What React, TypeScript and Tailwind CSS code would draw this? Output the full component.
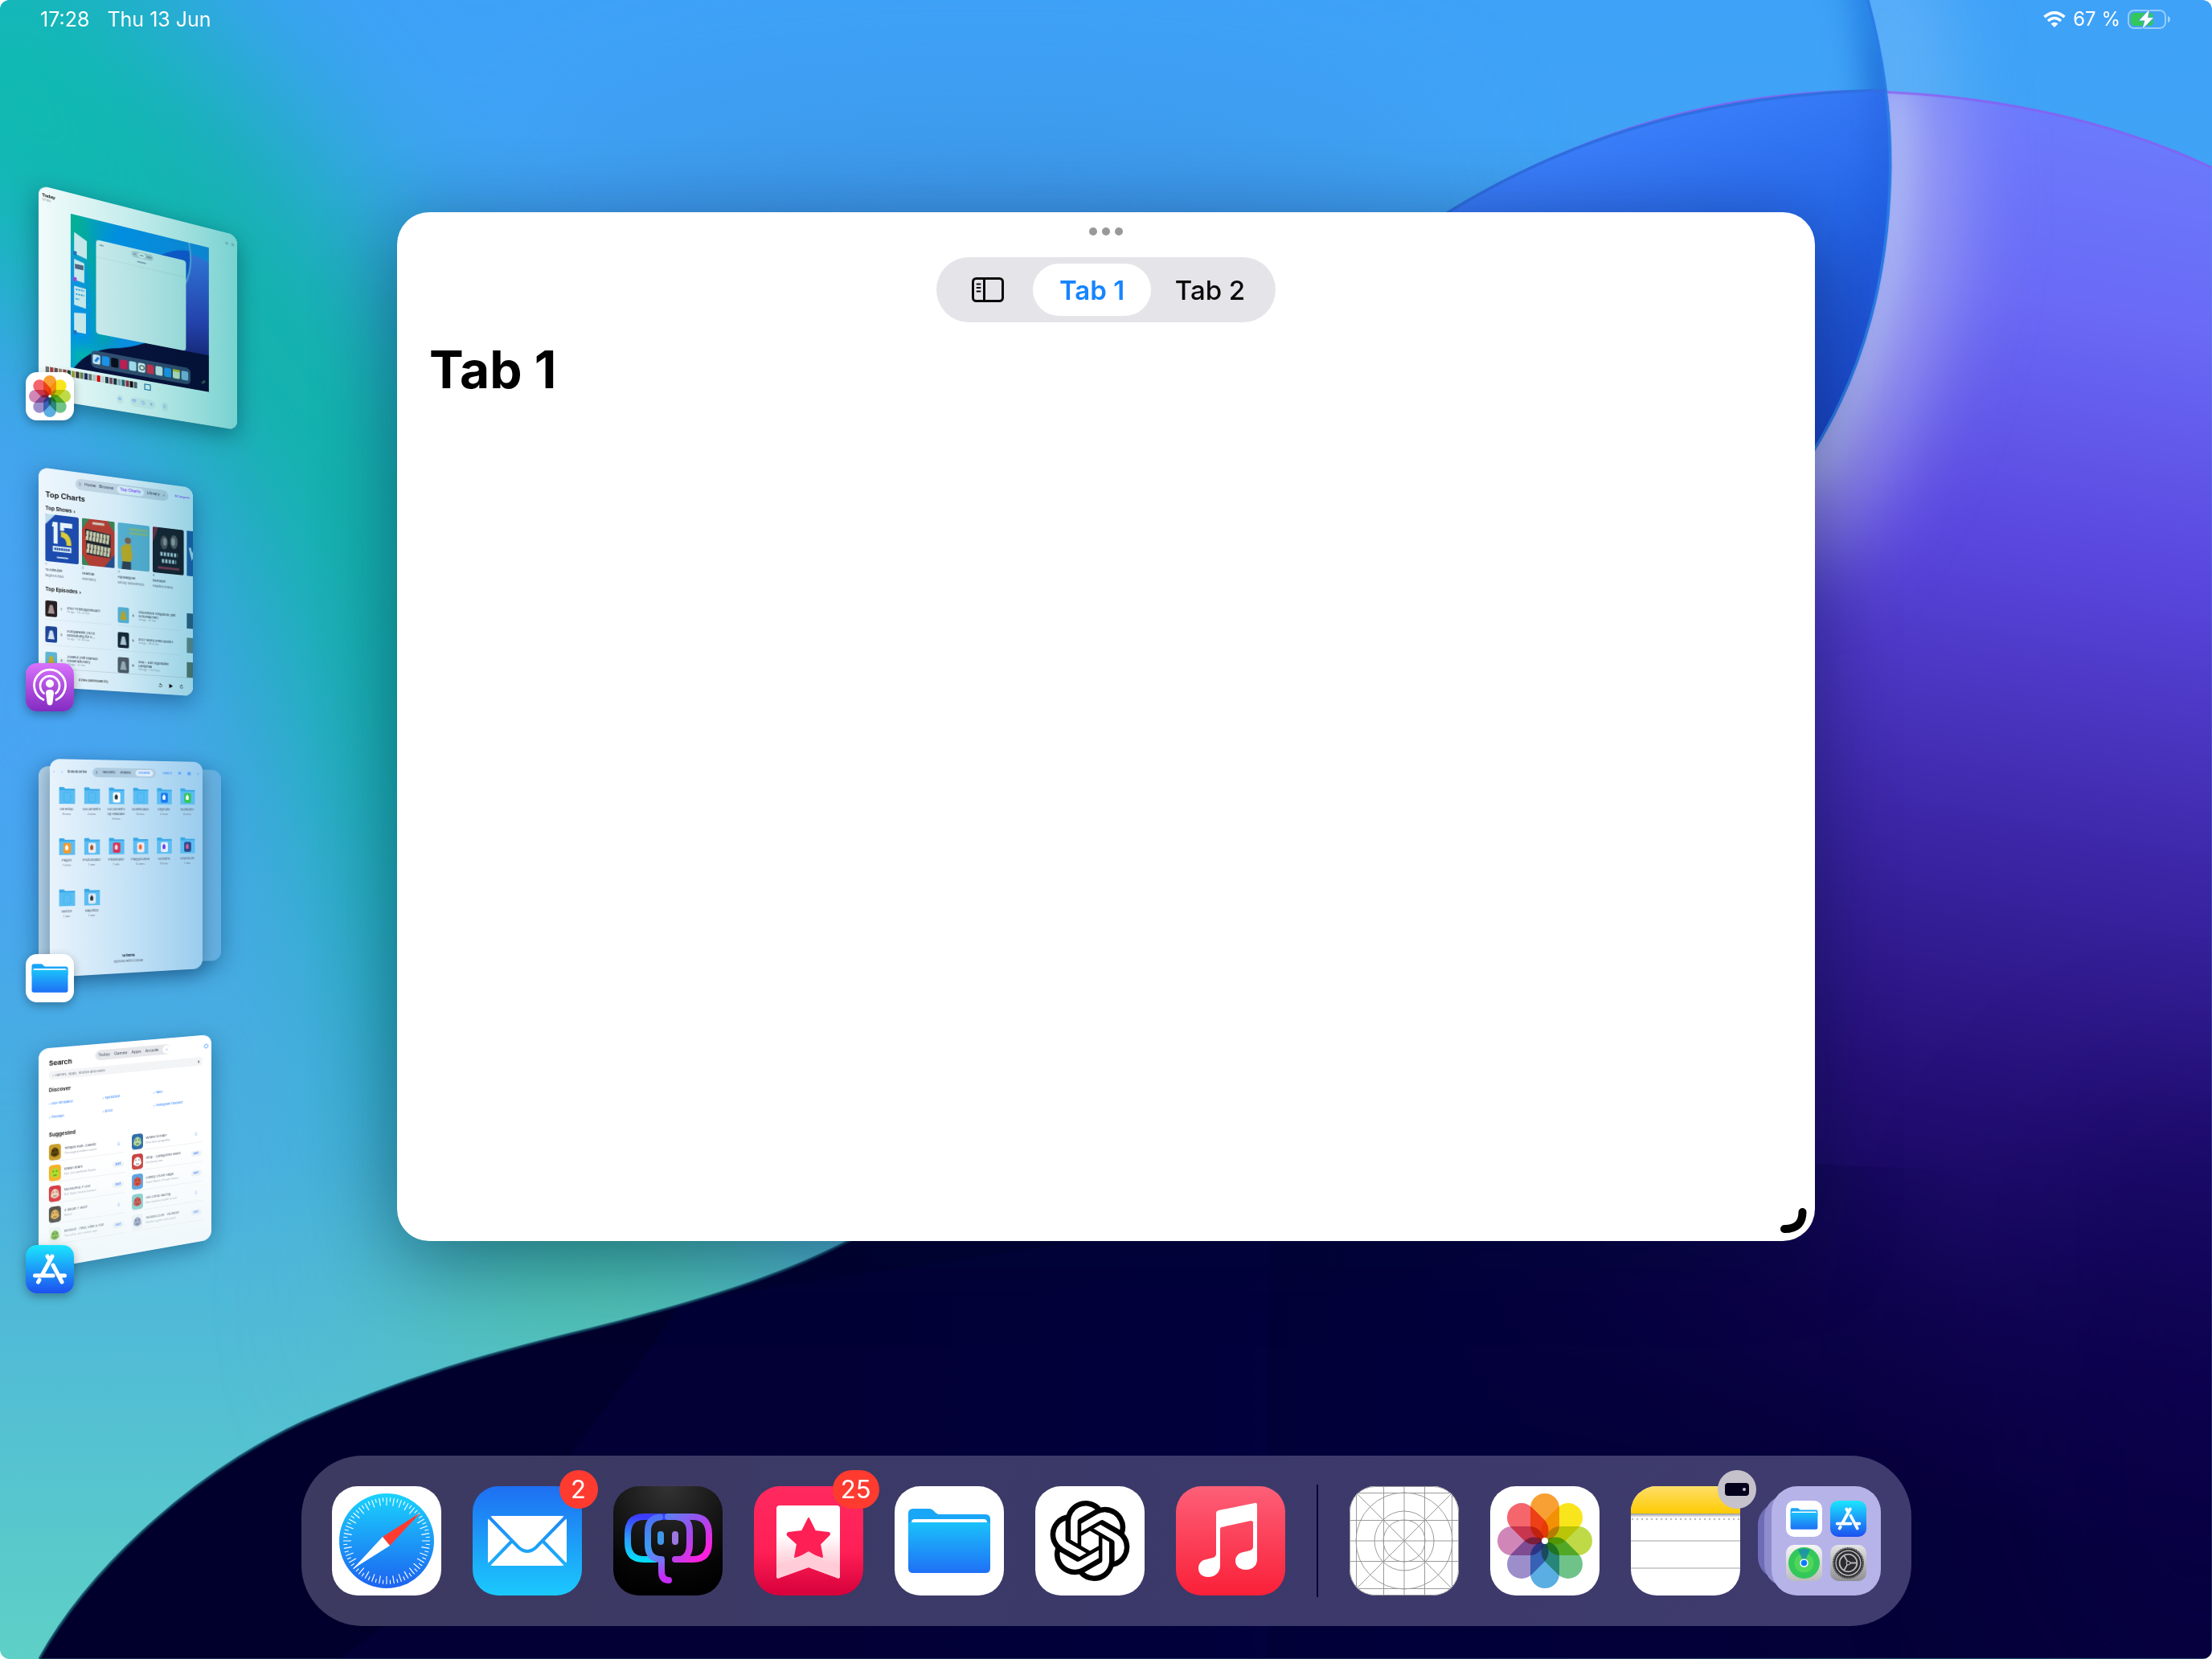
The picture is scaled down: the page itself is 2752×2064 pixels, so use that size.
import React, { useState } from 'react';

/* ---------- Wallpaper ---------- */

const Wallpaper: React.FC = () => (
  <svg className="absolute inset-0 w-full h-full" viewBox="0 0 1568 1176" preserveAspectRatio="xMidYMid slice" aria-hidden="true">
    <defs>
      <linearGradient id="sky" x1="0" y1="0" x2="0" y2="1">
        <stop offset="0" stopColor="#3ea2f8" />
        <stop offset="0.4" stopColor="#45a5ea" />
        <stop offset="0.7" stopColor="#49b0df" />
        <stop offset="1" stopColor="#5ed0c6" />
      </linearGradient>
      <linearGradient id="orb" gradientUnits="userSpaceOnUse" x1="1470" y1="64" x2="1280" y2="1060">
        <stop offset="0" stopColor="#6c7dfe" />
        <stop offset="0.15" stopColor="#6a6af6" />
        <stop offset="0.32" stopColor="#5a47de" />
        <stop offset="0.52" stopColor="#3d27a8" />
        <stop offset="0.7" stopColor="#251078" />
        <stop offset="0.86" stopColor="#100450" />
        <stop offset="1" stopColor="#050038" />
      </linearGradient>
      <linearGradient id="leaf" gradientUnits="userSpaceOnUse" x1="1200" y1="64" x2="1290" y2="320">
        <stop offset="0" stopColor="#3c80fb" />
        <stop offset="0.45" stopColor="#2668ea" />
        <stop offset="1" stopColor="#1c46ca" />
      </linearGradient>
      <linearGradient id="night" gradientUnits="userSpaceOnUse" x1="560" y1="0" x2="1400" y2="0">
        <stop offset="0" stopColor="#01002c" />
        <stop offset="0.5" stopColor="#02003a" />
        <stop offset="1" stopColor="#02003a" stopOpacity="0" />
      </linearGradient>
      <filter id="blur35" filterUnits="userSpaceOnUse" x="-300" y="-300" width="2200" height="1800" colorInterpolationFilters="sRGB"><feGaussianBlur stdDeviation="34" /></filter>
      <filter id="blur60" filterUnits="userSpaceOnUse" x="-300" y="-300" width="2200" height="1800" colorInterpolationFilters="sRGB"><feGaussianBlur stdDeviation="60" /></filter>
      <filter id="blur12" filterUnits="userSpaceOnUse" x="-300" y="-300" width="2200" height="1800" colorInterpolationFilters="sRGB"><feGaussianBlur stdDeviation="12" /></filter>
      <clipPath id="orbClip">
        <path d="M1000 168C1090 105 1200 64 1320 64C1415 66 1500 86 1568 118V1176H28C60 1118 130 1048 215 1008C320 962 400 948 450 934C510 918 560 902 605 878L900 700Z" />
      </clipPath>
      <clipPath id="rightOfArc">
        <path d="M1324 0C1335 40 1340 80 1340 118C1339 195 1322 262 1284 322V1176H1568V0Z" />
      </clipPath>
      <clipPath id="leftOfArc">
        <path d="M1324 0C1335 40 1340 80 1340 118C1339 195 1322 262 1284 322L900 322V0Z" />
      </clipPath>
    </defs>
    <rect width="1568" height="1176" fill="url(#sky)" />
    <g filter="url(#blur60)">
      <path d="M-60 10L90 110L250 320L320 540L400 780L460 960" stroke="#10b3a8" strokeWidth="190" fill="none" />
      <ellipse cx="0" cy="60" rx="120" ry="150" fill="#0fbab0" />
      <ellipse cx="700" cy="150" rx="300" ry="60" fill="#3a8fdf" opacity="0.7" />
      <ellipse cx="10" cy="500" rx="80" ry="200" fill="#48a4f4" />
      <ellipse cx="430" cy="920" rx="150" ry="60" fill="#5bc4ad" />
    </g>
    <g clipPath="url(#leftOfArc)">
      <path d="M1318 -40C1335 40 1340 80 1340 118" stroke="#1f78dd" strokeWidth="22" fill="none" filter="url(#blur12)" />
    </g>
    <g clipPath="url(#rightOfArc)">
      <path d="M1330 -40C1345 40 1352 80 1352 130" stroke="#8cc4fa" strokeWidth="40" fill="none" filter="url(#blur35)" opacity="0.8" />
    </g>
    <g clipPath="url(#orbClip)">
      <rect width="1568" height="1176" fill="url(#orb)" />
      <ellipse cx="1560" cy="1010" rx="150" ry="230" fill="#0a0150" opacity="0.4" filter="url(#blur60)" />
      <g clipPath="url(#rightOfArc)">
        <path d="M1338 40C1356 150 1350 250 1260 380" stroke="#b3b6f0" strokeWidth="58" fill="none" filter="url(#blur35)" />
        <path d="M1342 60C1346 150 1338 230 1280 340" stroke="#b6caf6" strokeWidth="14" fill="none" filter="url(#blur12)" />
      </g>
      <path d="M28 1176C60 1118 130 1048 215 1008C320 962 400 948 450 934C510 918 560 902 605 878L700 800L1400 830V1176Z" fill="url(#night)" />
      <path d="M484 922C440 990 400 1030 370 1080L240 1176H900V860Z" fill="#060050" opacity="0.25" />
      <path d="M1000 168C1090 105 1200 64 1320 64C1415 66 1500 86 1568 118" stroke="#8a5cf0" strokeWidth="3" fill="none" opacity="0.8" />
    </g>
    <path d="M1000 168C1090 105 1200 66 1337 64C1342 90 1340 118 1340 118C1339 195 1322 262 1284 322L1000 322Z" fill="url(#leaf)" />
    <g clipPath="url(#leftOfArc)">
      <path d="M1336 30C1342 100 1339 195 1284 322" stroke="#1a4bc8" strokeWidth="14" fill="none" opacity="0.5" filter="url(#blur12)" />
    </g>
    <path d="M1324 0C1335 40 1340 80 1340 118C1339 195 1322 262 1284 322" stroke="#2b7ce6" strokeWidth="2" fill="none" />
    <path d="M1000 168C1090 105 1200 66 1337 64" stroke="#2f6fe0" strokeWidth="2" fill="none" />
    <path d="M28 1176C60 1118 130 1048 215 1008C320 962 400 948 450 934C510 918 560 902 605 878" stroke="#0d3a58" strokeWidth="2" fill="none" opacity="0.8" />
  </svg>
);

/* ---------- App icons ---------- */

const range = (n: number) => Array.from({ length: n }, (_, i) => i);

const Safari: React.FC = () => (
  <svg className="w-full h-full" viewBox="0 0 136 136">
    <defs>
      <linearGradient id="safari" x1="0" y1="0" x2="0" y2="1">
        <stop offset="0" stopColor="#1ad3fd" />
        <stop offset="1" stopColor="#1d62f0" />
      </linearGradient>
    </defs>
    <rect width="136" height="136" fill="#fff" />
    <circle cx="68" cy="68" r="59" fill="url(#safari)" />
    {range(72).map((i) => (
      <path key={i} d={i % 2 ? 'M68 14V19' : 'M68 14V24'} stroke="#fff" strokeWidth="1.1" transform={`rotate(${i * 5} 68 68)`} />
    ))}
    <path d="M110 33L63 63L72 74Z" fill="#ff3b30" />
    <path d="M26 103L63 63L72 74Z" fill="#fff" />
  </svg>
);

const Mail: React.FC = () => (
  <svg className="w-full h-full" viewBox="0 0 136 136">
    <defs>
      <linearGradient id="mail" gradientUnits="userSpaceOnUse" x1="0" y1="0" x2="0" y2="136">
        <stop offset="0" stopColor="#1e6ff2" />
        <stop offset="1" stopColor="#1bc9fd" />
      </linearGradient>
    </defs>
    <rect width="136" height="136" fill="url(#mail)" />
    <rect x="19" y="37" width="98" height="62" rx="6" fill="#fff" />
    <path d="M20 38L57 76Q68 86 79 76L116 38M20 98L49 68M116 98L87 68" stroke="url(#mail)" strokeWidth="4" fill="none" />
  </svg>
);

const Elephant: React.FC = () => (
  <svg className="w-full h-full" viewBox="0 0 136 136">
    <defs>
      <radialGradient id="elBg" cx="0.5" cy="0" r="1">
        <stop offset="0" stopColor="#333" />
        <stop offset="0.8" stopColor="#050505" />
        <stop offset="1" stopColor="#000" />
      </radialGradient>
      <linearGradient id="elLeft" gradientUnits="userSpaceOnUse" x1="30" y1="38" x2="24" y2="95">
        <stop offset="0" stopColor="#3c3cff" />
        <stop offset="0.5" stopColor="#2d9cff" />
        <stop offset="1" stopColor="#00e5f5" />
      </linearGradient>
      <linearGradient id="elInner" gradientUnits="userSpaceOnUse" x1="43" y1="38" x2="62" y2="112">
        <stop offset="0" stopColor="#4f6ef5" />
        <stop offset="0.5" stopColor="#3c9df5" />
        <stop offset="0.78" stopColor="#7f6cf5" />
        <stop offset="1" stopColor="#c52cf5" />
      </linearGradient>
      <linearGradient id="elRight" gradientUnits="userSpaceOnUse" x1="66" y1="36" x2="116" y2="84">
        <stop offset="0" stopColor="#5a82f0" />
        <stop offset="0.5" stopColor="#a04bf0" />
        <stop offset="1" stopColor="#ff1fdc" />
      </linearGradient>
    </defs>
    <rect width="136" height="136" fill="url(#elBg)" />
    <g fill="none" strokeWidth="8" strokeLinecap="round" strokeLinejoin="round">
      <path d="M68 38H38Q18 38 18 60V70Q18 91 38 91H52" stroke="url(#elLeft)" />
      <path d="M58 38.500Q43 40 43 56V72Q43 90 58 91H60V106Q60 117 69 117" stroke="url(#elInner)" />
      <path d="M68 38H99Q119 38 119 60V70Q119 91 99 91H77" stroke="url(#elRight)" />
      <path d="M80 38.500Q95 40 95 56V72Q95 88 84 91" stroke="url(#elRight)" />
    </g>
    <rect x="55" y="56" width="8" height="17" rx="4" fill="#3f97e8" />
    <rect x="73" y="56" width="8" height="17" rx="4" fill="#9a78e0" />
  </svg>
);

const Bookmark: React.FC = () => (
  <svg className="w-full h-full" viewBox="0 0 136 136">
    <defs>
      <linearGradient id="bmBg" x1="0" y1="0" x2="0" y2="1">
        <stop offset="0" stopColor="#ff2a60" />
        <stop offset="0.6" stopColor="#fe1f55" />
        <stop offset="1" stopColor="#d6003a" />
      </linearGradient>
      <linearGradient id="bmPaper" x1="0" y1="0" x2="0" y2="1">
        <stop offset="0.4" stopColor="#fff" />
        <stop offset="1" stopColor="#ffb3c4" />
      </linearGradient>
    </defs>
    <rect width="136" height="136" fill="url(#bmBg)" />
    <path d="M32 24H103Q107 24 107 28V112Q107 116 103 114L68 101L32 114Q28 116 28 112V28Q28 24 32 24Z" fill="url(#bmPaper)" />
    <path d="M68 40L76 56L93 58Q95 59 93 61L82 72L85 88L68 82L51 88L54 72L42 61Q41 59 43 58L60 56Z" fill="#fe1f55" stroke="#fe1f55" strokeWidth="2" strokeLinejoin="round" />
    <path d="M28 104L68 81L107 104V112Q107 116 103 114L68 101L32 114Q28 116 28 112Z" fill="#ffccd7" />
  </svg>
);

const Files: React.FC = () => (
  <svg className="w-full h-full" viewBox="0 0 136 136">
    <defs>
      <linearGradient id="files" x1="0" y1="0" x2="0" y2="1">
        <stop offset="0" stopColor="#1bc1fb" />
        <stop offset="1" stopColor="#1f70f5" />
      </linearGradient>
    </defs>
    <rect width="136" height="136" fill="#fff" />
    <path d="M17 34Q17 28 23 28H43Q46 28 48 30L51 33Q53 35 56 35H113Q119 35 119 41V60H17Z" fill="#1aa6f7" />
    <path d="M21 48V45Q21 41 25 41H111Q115 41 115 45V48Z" fill="#fff" />
    <path d="M17 48Q17 45 20 45H116Q119 45 119 48V102Q119 108 113 108H23Q17 108 17 102Z" fill="url(#files)" />
  </svg>
);

const Knot: React.FC = () => (
  <svg className="w-full h-full bg-white" viewBox="-4.32 -4.32 32.64 32.64">
    <path d="M22.2819 9.8211a5.9847 5.9847 0 0 0-.5157-4.9108 6.0462 6.0462 0 0 0-6.5098-2.9A6.0651 6.0651 0 0 0 4.9807 4.1818a5.9847 5.9847 0 0 0-3.9977 2.9 6.0462 6.0462 0 0 0 .7427 7.0966 5.98 5.98 0 0 0 .511 4.9107 6.051 6.051 0 0 0 6.5146 2.9001A5.9847 5.9847 0 0 0 13.2599 24a6.0557 6.0557 0 0 0 5.7718-4.2058 5.9894 5.9894 0 0 0 3.9977-2.9001 6.0557 6.0557 0 0 0-.7475-7.0729zm-9.022 12.6081a4.4755 4.4755 0 0 1-2.8764-1.0408l.1419-.0804 4.7783-2.7582a.7948.7948 0 0 0 .3927-.6813v-6.7369l2.02 1.1686a.071.071 0 0 1 .038.052v5.5826a4.504 4.504 0 0 1-4.4945 4.4944zm-9.6607-4.1254a4.4708 4.4708 0 0 1-.5346-3.0137l.142.0852 4.783 2.7582a.7712.7712 0 0 0 .7806 0l5.8428-3.3685v2.3324a.0804.0804 0 0 1-.0332.0615L9.74 19.9502a4.4992 4.4992 0 0 1-6.1408-1.6464zM2.3408 7.8956a4.485 4.485 0 0 1 2.3655-1.9728V11.6a.7664.7664 0 0 0 .3879.6765l5.8144 3.3543-2.0201 1.1685a.0757.0757 0 0 1-.071 0l-4.8303-2.7865A4.504 4.504 0 0 1 2.3408 7.872zm16.5963 3.8558L13.1038 8.364 15.1192 7.2a.0757.0757 0 0 1 .071 0l4.8303 2.7913a4.4944 4.4944 0 0 1-.6765 8.1042v-5.6772a.79.79 0 0 0-.407-.667zm2.0107-3.0231l-.142-.0852-4.7735-2.7818a.7759.7759 0 0 0-.7854 0L9.409 9.2297V6.8974a.0662.0662 0 0 1 .0284-.0615l4.8303-2.7866a4.4992 4.4992 0 0 1 6.6802 4.66zM8.3065 12.863l-2.02-1.1638a.0804.0804 0 0 1-.038-.0567V6.0742a4.4992 4.4992 0 0 1 7.3757-3.4537l-.142.0805L8.704 5.459a.7948.7948 0 0 0-.3927.6813zm1.0976-2.3654l2.602-1.4998 2.6069 1.4998v2.9994l-2.5974 1.4997-2.6067-1.4997Z" />
  </svg>
);

const Music: React.FC = () => (
  <svg className="w-full h-full" viewBox="0 0 136 136">
    <defs>
      <linearGradient id="music" x1="0" y1="0" x2="0" y2="1">
        <stop offset="0" stopColor="#fd5f78" />
        <stop offset="1" stopColor="#fa2038" />
      </linearGradient>
    </defs>
    <rect width="136" height="136" fill="url(#music)" />
    <path d="M98 21Q101 20 101 24V91C101 99 95 104 87 104C80 104 74 100 74 93C74 87 78 83 84 82L92 80Q96 79 96 75V45Q96 43 93 43L57 51Q55 51 55 54V99C55 107 49 113 40 113C33 113 28 109 28 102C28 96 32 92 38 91L46 89Q50 88 50 84V34Q50 31 53 30Z" fill="#fff" />
  </svg>
);

const Template: React.FC = () => (
  <svg className="w-full h-full" viewBox="0 0 136 136">
    <rect width="136" height="136" fill="#fff" />
    <g fill="none" stroke="#9a9a9a" strokeWidth="1">
      <rect x="0.5" y="0.5" width="135" height="135" rx="31" />
      <path d="M8.500 0V136M42.500 0V136M68 0V136M93.500 0V136M127.500 0V136M0 8.500H136M0 42.500H136M0 68H136M0 93.500H136M0 127.500H136M8 8L128 128M128 8L8 128" />
      <circle cx="68" cy="68" r="60" />
      <circle cx="68" cy="68" r="37" />
      <circle cx="68" cy="68" r="26" />
    </g>
  </svg>
);

const petals = ['#f8a033', '#f9e51c', '#bfda46', '#6fc389', '#5aaee2', '#9c8ecb', '#d087b8', '#f4656c'];

const Photos: React.FC = () => (
  <svg className="w-full h-full isolate" viewBox="0 0 136 136">
    <rect width="136" height="136" fill="#fff" />
    {petals.map((color, i) => (
      <rect key={color} x="50" y="9" width="36" height="58" rx="18" fill={color} transform={`rotate(${i * 45} 68 68)`} className="mix-blend-multiply" />
    ))}
    <circle cx="68" cy="68" r="4" fill="#fff" />
  </svg>
);

const Notes: React.FC = () => (
  <svg className="w-full h-full" viewBox="0 0 136 136">
    <defs>
      <linearGradient id="notes" x1="0" y1="0" x2="0" y2="1">
        <stop offset="0" stopColor="#fede68" />
        <stop offset="1" stopColor="#fecb02" />
      </linearGradient>
      <linearGradient id="notesEdge" x1="0" y1="0" x2="0" y2="1">
        <stop offset="0" stopColor="#999" />
        <stop offset="1" stopColor="#fff" />
      </linearGradient>
    </defs>
    <rect width="136" height="136" fill="#fff" />
    <rect y="34" width="136" height="5" fill="url(#notesEdge)" />
    <rect width="136" height="34" fill="url(#notes)" />
    <path d="M2 41H136" stroke="#bdbdbd" strokeWidth="2.500" strokeLinecap="round" strokeDasharray="0.1 5.9" />
    <path d="M0 68H136M0 102H136" stroke="#d0d0d2" strokeWidth="2" />
  </svg>
);

const AppStore: React.FC = () => (
  <svg className="w-full h-full" viewBox="0 0 60 60">
    <defs>
      <linearGradient id="store" x1="0" y1="0" x2="0" y2="1">
        <stop offset="0" stopColor="#1be6fe" />
        <stop offset="0.5" stopColor="#1c9bf8" />
        <stop offset="1" stopColor="#1d50f0" />
      </linearGradient>
    </defs>
    <rect width="60" height="60" fill="url(#store)" />
    <path d="M33 14L21 36M27 14L29.500 18M34 25L45 46M17 43.500L15.500 46M11.500 38H34M43 38H48.500" stroke="#fff" strokeWidth="5" strokeLinecap="round" fill="none" />
  </svg>
);

const Podcasts: React.FC = () => (
  <svg className="w-full h-full" viewBox="0 0 60 60">
    <defs>
      <linearGradient id="pods" x1="0" y1="0" x2="0" y2="1">
        <stop offset="0" stopColor="#d971fc" />
        <stop offset="1" stopColor="#832bc1" />
      </linearGradient>
    </defs>
    <rect width="60" height="60" fill="url(#pods)" />
    <g fill="none" stroke="#fff" strokeWidth="2.800" strokeLinecap="round">
      <path d="M22 45.500A19.500 19.500 0 1 1 38 45.500" />
      <path d="M22.500 37.500A12 12 0 1 1 37.500 37.500" />
    </g>
    <circle cx="30" cy="25.500" r="5" fill="#fff" />
    <path d="M25 37Q25 33 30 33Q35 33 35 37L33.500 49Q33 52.500 30 52.500Q27 52.500 26.500 49Z" fill="#fff" />
  </svg>
);

const FindMy: React.FC = () => (
  <svg className="w-full h-full" viewBox="0 0 60 60">
    <defs>
      <linearGradient id="fmBg" x1="0" y1="0" x2="0" y2="1">
        <stop offset="0" stopColor="#f6f6f6" />
        <stop offset="1" stopColor="#bdbdbd" />
      </linearGradient>
    </defs>
    <rect width="60" height="60" fill="url(#fmBg)" />
    <circle cx="30" cy="30" r="26" fill="#34c85a" />
    <circle cx="30" cy="30" r="16" fill="#4fd65b" />
    <path d="M30 30L20 8Q30 4 40 8Z" fill="#1687b8" opacity="0.75" />
    <circle cx="30" cy="30" r="7" fill="#fff" />
    <circle cx="30" cy="30" r="5" fill="#0a7cff" />
  </svg>
);

const Settings: React.FC = () => (
  <svg className="w-full h-full" viewBox="0 0 60 60">
    <defs>
      <linearGradient id="setBg" x1="0" y1="0" x2="0" y2="1">
        <stop offset="0" stopColor="#e4e4e7" />
        <stop offset="1" stopColor="#8e8e93" />
      </linearGradient>
    </defs>
    <rect width="60" height="60" fill="url(#setBg)" />
    <circle cx="30" cy="30" r="25" fill="none" stroke="#2c2c2e" strokeWidth="2" strokeDasharray="1.500 1" />
    <circle cx="30" cy="30" r="24" fill="#2c2c2e" />
    <g fill="none" stroke="#b5b5b9">
      <circle cx="30" cy="30" r="20.500" strokeWidth="2" />
      <circle cx="30" cy="30" r="14.500" strokeWidth="2.500" />
      <path d="M33 30H45M28.500 32.500L22.500 43M28.500 27.500L22.500 17" strokeWidth="2.500" />
      <circle cx="30" cy="30" r="3" strokeWidth="1.500" />
    </g>
  </svg>
);

/* ---------- Stage strip previews ---------- */

interface TiltProps {
  width: number;
  height: number;
  left: [number, number];
  right: [number, number];
  className?: string;
  children?: React.ReactNode;
}

// Turns a flat panel away from the viewer: left and right give the top and bottom of each edge
const Tilt: React.FC<TiltProps> = ({ width, height, left, right, className = '', children }) => {
  const ratio = (left[1] - left[0]) / (right[1] - right[0]);
  const g = (ratio - 1) / width;
  const b = (right[0] * ratio - left[0]) / width;
  const c = (left[1] - left[0]) / height;
  const transform = `matrix3d(${ratio},${b},0,${g},0,${c},0,0,0,0,1,0,0,${left[0]},0,1)`;
  return (
    <div className={`absolute top-0 origin-top-left overflow-hidden ${className}`} style={{ width, height, transform }}>
      {children}
    </div>
  );
};

const PhotosPreview: React.FC = () => (
  <Tilt width={247} height={265} left={[31, 296]} right={[94, 336]} className="left-0 rounded-xl bg-white shadow-[0_8px_30px_rgba(0,40,60,0.45)]">
    <div className="flex h-[26px] items-start justify-between px-1 pt-2">
      <div className="leading-[6px]">
        <p className="text-[5px] font-bold">Today</p>
        <p className="text-[4px] text-gray-500">17:25</p>
      </div>
      <div className="flex gap-1 pt-1">
        <span className="size-1 rounded-full bg-gray-300" />
        <span className="size-1 rounded-full bg-gray-300" />
      </div>
    </div>
    <svg className="ml-[37px] block h-[194px] w-[172px]" viewBox="0 0 172 194">
      <defs>
        <linearGradient id="miniSky" x1="0" y1="0" x2="1" y2="0.4">
          <stop offset="0" stopColor="#08b8a0" />
          <stop offset="0.3" stopColor="#0098f0" />
          <stop offset="1" stopColor="#1a9cf5" />
        </linearGradient>
        <linearGradient id="miniOrb" x1="0" y1="0" x2="0" y2="1">
          <stop offset="0" stopColor="#4f86f5" />
          <stop offset="0.5" stopColor="#3a4cc8" />
          <stop offset="1" stopColor="#0c1450" />
        </linearGradient>
        <filter id="miniBlur" x="-50%" y="-50%" width="200%" height="200%"><feGaussianBlur stdDeviation="9" /></filter>
      </defs>
      <rect width="172" height="194" fill="url(#miniSky)" />
      <g filter="url(#miniBlur)">
        <ellipse cx="4" cy="90" rx="9" ry="50" fill="#1496f5" />
        <path d="M0 0L30 60L40 160" stroke="#00b890" strokeWidth="14" fill="none" />
        <rect x="0" y="165" width="34" height="30" fill="#00c0b0" />
      </g>
      <path d="M105 30Q135 6 172 20V194H4Q20 168 50 160Q70 156 90 145Z" fill="url(#miniOrb)" />
      <path d="M4 194Q20 168 50 160Q70 156 90 145H172V194Z" fill="#071440" />
      <path d="M100 34Q122 12 147 11Q150 35 141 56H100Z" fill="#1264e0" />
      <path d="M146 0Q152 32 141 56" stroke="#7fb4ee" strokeWidth="2" fill="none" />
      <rect x="30" y="25" width="112" height="120" rx="4" fill="#eef6f8" />
      <path d="M30 47H142" stroke="#ccd9dd" strokeWidth="0.5" />
      <rect x="73" y="28" width="27" height="8" rx="4" fill="#ccd6dc" />
      <rect x="81" y="29" width="9" height="6" rx="3" fill="#fff" />
      <path d="M83 32H88M76 32H78M92 32H98M80 41H91M34 31H39" stroke="#56708a" strokeWidth="1" />
      <path d="M4 22L19 30V53L4 49ZM4 56L16 59V84L4 82ZM4 90L18 91V116L4 114ZM4 124L18 122V148L4 148Z" fill="#e3f2f5" />
      <path d="M5 62H15V68H5Z" fill="#5b6a86" />
      <path d="M6 94H16M6 100H16M6 106H10" stroke="#3aa6ec" strokeWidth="2" strokeDasharray="2 1" />
      <path d="M3 46H7V51H3ZM3 146H7V151H3Z" fill="#2576c8" />
      <path d="M3 79H7V84H3Z" fill="#b34be0" />
      <rect x="24" y="167" width="124" height="22" rx="6" fill="#3a5478" />
      {['#e6f4fb', '#1d9df7', '#0c1020', '#ef2058', '#cdeafa', '#fff', '#fb3a52', '#f2f2f2', '#20a0f8', '#f6f0d0', '#9cc4e8'].map((c, i) => (
        <rect key={i} x={26 + i * 11} y="172" width="9" height="12" rx="2" fill={c} />
      ))}
      <path d="M29 181L33 175" stroke="#1d80f0" strokeWidth="3" />
      <circle cx="86" cy="178" r="3" fill="none" stroke="#222" />
      <rect x="125" y="172" width="9" height="3" fill="#e8c83c" />
      <path d="M163 184L167 180" stroke="#46685c" strokeWidth="3" />
    </svg>
    <div className="ml-2 mt-1 flex h-2 gap-px">
      {['#777', '#b44', '#655', '#a87', '#a44', '#243', '#aa4', '#433', '#785', '#236', '#777', '#ccc', '#f00', '#ddd', '#345', '#856', '#234', '#9bb', '#367', '#a34', '#111', '#667'].map((c, i) => (
        <span key={i} className="w-1 shrink-0" style={{ backgroundColor: c }} />
      ))}
      <span className="ml-2 w-2 border border-sky-700" />
    </div>
    <div className="mt-3 flex items-center justify-center gap-2">
      <span className="flex h-3 w-2 items-center justify-center rounded-full bg-gray-100 text-[5px] text-blue-500">⇧</span>
      <span className="flex h-3 w-8 items-center justify-around rounded-full bg-gray-100 text-[5px] text-blue-500"><span>♡</span><span>ⓘ</span><span>≡</span></span>
      <span className="flex h-3 w-2 items-center justify-center rounded-full bg-gray-100 text-[5px] text-blue-500">▯</span>
    </div>
    <div className="absolute inset-0 bg-linear-to-r from-[#f2fbfb] via-[#bdeae9] to-[#76d2d0] mix-blend-multiply" />
  </Tilt>
);

const shows = [
  { rank: 1, title: '15 Minuten', by: 'tagesschau', cover: 'bg-[#1f4fb0]' },
  { rank: 2, title: 'Skandal', by: 'Wondery', cover: 'bg-[#cf4336]' },
  { rank: 3, title: 'Apokalypse', by: 'Micky Beisenherz', cover: 'bg-[#66bdd6]' },
  { rank: 4, title: 'Mordlust', by: 'Paulina Krasa', cover: 'bg-[#1b2c38]' },
];

const CoverArt: React.FC<{ rank: number }> = ({ rank }) => (
  <svg className="h-full w-full" viewBox="0 0 41 59" preserveAspectRatio="none">
    {rank === 1 && (
      <>
        <path d="M0 0H12L0 13Z" fill="#cfe6f0" />
        <path d="M9 9H15V36H10V15H8ZM18 9H33V15H23V19H18Z" fill="#fff" />
        <path d="M19 20Q32 21 32 37H26Q26 27 19 27Z" fill="#f3d73a" />
        <path d="M9 39H32V46H9Z" fill="#e6f0f6" />
        <path d="M11 42.500H30" stroke="#2a56a8" strokeWidth="3" strokeDasharray="2 0.800" />
        <path d="M14 53H28" stroke="#c6daf0" strokeWidth="2" />
      </>
    )}
    {rank === 2 && (
      <>
        <path d="M0 0H9L0 14ZM41 0V14L32 0ZM0 59V45L9 59Z" fill="#3f8f5c" />
        <path d="M41 59V42L28 59Z" fill="#2b5590" />
        <path d="M13 5H28" stroke="#f6dcc8" strokeWidth="3" />
        <path d="M4 13L36 17V47L6 45Z" fill="#23262c" />
        <path d="M5 21L35 24M6 37L36 40" stroke="#ecdcb4" strokeWidth="12" strokeDasharray="3.400 0.900" />
        <path d="M5 21L35 24M6 37L36 40" stroke="#23262c" strokeWidth="2" strokeDasharray="0.800 3.500" />
      </>
    )}
    {rank === 3 && (
      <>
        <path d="M15 7H39M15 12H39" stroke="#a8c870" strokeWidth="3" strokeDasharray="2 0.600" />
        <path d="M4 32Q10 24 17 27L19 44L15 50H6Z" fill="#dbb42a" />
        <circle cx="13" cy="22" r="4" fill="#8c6b58" />
        <path d="M6 49H17V59H5Z" fill="#34495c" />
      </>
    )}
    {rank === 4 && (
      <>
        <path d="M0 0H7L4 10L0 20Z" fill="#803848" />
        <ellipse cx="15" cy="19" rx="5" ry="9" fill="#5e5c60" />
        <ellipse cx="28" cy="17" rx="5" ry="9" fill="#6c6a6c" />
        <ellipse cx="16" cy="18" rx="2.500" ry="5" fill="#a8a09c" />
        <ellipse cx="27" cy="17" rx="2.500" ry="5" fill="#b4aca6" />
        <path d="M10 34H33M12 43H31" stroke="#d6dcdc" strokeWidth="5" strokeDasharray="3 1.500" />
        <path d="M7 52H35" stroke="#9c4458" strokeWidth="3" />
      </>
    )}
    {rank === 5 && <path d="M4 22L7 34L12 20" stroke="#e2f0f6" strokeWidth="3" fill="none" />}
  </svg>
);

const episodes = [
  [
    { n: 1, title: '#167 Fremdgesteuert', sub: '1d ago · 1 hr 34 min', art: 'bg-[#2a2023]', ink: '#b49a94' },
    { n: 2, title: 'Europawahl 2024: Bedeutung für E…', sub: '1d ago · 1 hr 20 min', art: 'bg-[#21479a]', ink: '#e4eef8' },
    { n: 3, title: 'Zollwut (mit Markus Feldenkirchen)', sub: '2d ago · 33 min', art: 'bg-[#66bdd6]', ink: '#dbb42a' },
  ],
  [
    { n: 4, title: 'Stockholm Singdrom (mit Schumacher)', sub: '3d ago · 43 min', art: 'bg-[#66bdd6]', ink: '#dbb42a' },
    { n: 5, title: '#127 Mord ohne Motiv?', sub: '3d ago · 59:31 min', art: 'bg-[#1b2c38]', ink: '#cfd8dc' },
    { n: 6, title: '#68 – Der legendäre Lampinal', sub: '10d ago · 1 h 51 min', art: 'bg-[#5b6268]', ink: '#b4babd' },
  ],
];

const PodcastsPreview: React.FC = () => (
  <Tilt width={192} height={273} left={[20, 293]} right={[46, 305]} className="left-0 rounded-xl bg-white shadow-[0_8px_30px_rgba(0,40,80,0.45)]">
    <div className="flex h-[26px] items-start justify-between pl-11 pr-1 pt-2">
      <div className="flex h-[14px] items-center gap-1 rounded-full bg-[#dfe3e8] px-1 text-[5px] text-gray-700">
        <span>▯</span><span>Home</span><span>Browse</span>
        <span className="rounded-full bg-white px-1 py-px text-violet-600">Top Charts</span>
        <span>Library</span><span>⌕</span>
      </div>
      <span className="pt-1 text-[3px] text-violet-600">All Categories</span>
    </div>
    <div className="pl-2">
      <p className="text-[9px] font-semibold leading-[14px]">Top Charts</p>
      <p className="mt-1 text-[6px] font-semibold leading-[12px]">Top Shows ›</p>
      <div className="flex gap-1 pt-px">
        {shows.map((s) => (
          <div key={s.rank} className="w-10 shrink-0 text-[4px] leading-[7px] text-gray-500">
            <div className={`h-[59px] overflow-hidden rounded-xs ${s.cover}`}><CoverArt rank={s.rank} /></div>
            <p>{s.rank}</p>
            <p className="text-gray-800">{s.title}</p>
            <p>{s.by}</p>
          </div>
        ))}
        <div className="h-[59px] w-10 shrink-0 bg-[#2270b0]"><CoverArt rank={5} /></div>
      </div>
      <p className="mt-2 text-[6px] font-semibold leading-[12px]">Top Episodes ›</p>
      <div className="flex gap-2 pt-1">
        {episodes.map((col, i) => (
          <div key={i} className="w-20 shrink-0">
            {col.map((e) => (
              <div key={e.n} className="mb-1 flex h-[28px] items-center gap-1 border-b border-black/5 text-[4px] leading-[5px]">
                <span className={`flex h-5 w-[14px] shrink-0 items-center justify-center rounded-xs ${e.art}`}>
                  <svg className="h-4 w-3" viewBox="0 0 12 16"><path d="M4 4Q6 2 8 4L10 14H2ZM3 11L9 12" fill={e.ink} /></svg>
                </span>
                <span className="w-1">{e.n}</span>
                <span className="w-12">
                  <span className="block text-gray-800">{e.title}</span>
                  <span className="block text-[3px] text-gray-400">{e.sub}</span>
                </span>
              </div>
            ))}
          </div>
        ))}
        <div className="flex flex-col gap-3 pt-1">
          <span className="h-5 w-3 bg-[#38708c]" />
          <span className="h-5 w-3 bg-[#7d9a94]" />
          <span className="h-5 w-3 bg-[#6c8878]" />
        </div>
      </div>
    </div>
    <div className="absolute inset-x-0 bottom-0 flex h-6 items-center justify-end gap-2 border-t border-black/10 bg-white/90 pr-3 text-[6px]">
      <span className="mr-auto pl-12 text-[4px]">#296 (Mehrzahl in)</span>
      <span>↺</span><span>▶</span><span>↻</span>
    </div>
    <div className="absolute inset-0 bg-linear-to-r from-[#eef6fd] via-[#d3ebf7] to-[#98d2e4] mix-blend-multiply" />
  </Tilt>
);

const folders = [
  { name: 'Desktop', items: '9 items' },
  { name: 'Documents', items: '3 items' },
  { name: 'Documents by Readdle', items: '0 items', chip: 'bg-white', ink: '#1c2c30' },
  { name: 'Downloads', items: '0 items' },
  { name: 'Keynote', items: '2 items', chip: 'bg-[#1d7bf0]', ink: '#ffffff' },
  { name: 'Numbers', items: '0 items', chip: 'bg-[#35c759]', ink: '#ffffff' },
  { name: 'Pages', items: '7 items', chip: 'bg-[#f49a2a]', ink: '#ffffff' },
  { name: 'Photomator', items: '1 item', chip: 'bg-[#e8ecf2]', ink: '#a8502c' },
  { name: 'Pixelmator', items: '1 item', chip: 'bg-[#d8345a]', ink: '#f8d8e0' },
  { name: 'Playgrounds', items: '12 items', chip: 'bg-[#f0eaf0]', ink: '#f0602c' },
  { name: 'Screens', items: '0 items', chip: 'bg-[#e4eefc]', ink: '#6a3cf0' },
  { name: 'Shortcuts', items: '1 item', chip: 'bg-[#2c4a8c]', ink: '#d0609c' },
  { name: 'Sketch', items: '1 item' },
  { name: 'Slapstick', items: '1 item', chip: 'bg-[#dceaf4]', ink: '#2c343c' },
];

const FilesPreview: React.FC = () => (
  <>
    <Tilt width={227} height={249} left={[30, 279]} right={[35, 272]} className="left-0 rounded-xl bg-linear-to-r from-[#b4d2e6] to-[#62b0e2] shadow-[0_8px_30px_rgba(0,40,80,0.4)]" />
    <Tilt width={190} height={272} left={[21, 293]} right={[25, 282]} className="left-[14px] rounded-xl bg-linear-to-r from-[#e8f3fc] via-[#c4e2f6] to-[#9accee] shadow-[0_8px_24px_rgba(0,40,80,0.4)]">
      <div className="mt-2 flex h-[16px] items-center gap-1 px-1 text-[4px] text-blue-500">
        <span className="w-2">‹</span><span className="w-1">›</span>
        <span className="w-9 font-medium text-gray-800">iCloud Drive</span>
        <div className="flex h-3 items-center gap-[6px] rounded-full bg-[#aecbe0] px-1 text-gray-800">
          <span>▯</span><span>Recents</span><span>Shared</span>
          <span className="rounded-full bg-[#dcecfa] px-1 py-px text-blue-500">Browse</span>
        </div>
        <span className="ml-1">Select</span><span className="ml-1 text-[5px]">⊞</span><span className="ml-1 text-[5px]">▦</span><span className="ml-1 text-[5px]">⌕</span>
      </div>
      <div className="grid grid-cols-6 px-[5px] pt-[10px]">
        {folders.map((f) => (
          <div key={f.name} className="flex h-[64px] flex-col items-center text-center text-[4px] leading-[6px] text-gray-600">
            <div className="relative flex h-[22px] w-[19px] shrink-0 items-center justify-center">
              <svg className="absolute inset-0 h-full w-full" viewBox="0 0 19 22" preserveAspectRatio="none">
                <path d="M0 2Q0 1 1 1H5Q6 1 7 3H18Q19 3 19 4V21Q19 22 18 22H1Q0 22 0 21Z" fill="#3aa9e8" />
                <path d="M0 5H19V21Q19 22 18 22H1Q0 22 0 21Z" fill="#5bbdf2" />
              </svg>
              <span className={`relative mt-1 flex h-[13px] w-[9px] items-center justify-center rounded-xs ${f.chip ?? 'border border-sky-500/30'}`}>
                {f.ink && <svg className="h-2 w-[6px]" viewBox="0 0 6 8"><path d="M3 0L5 3L4.500 7H1.500L1 3Z" fill={f.ink} /></svg>}
              </span>
            </div>
            <p className="mt-1 w-6">{f.name}</p>
            <p className="text-[3px] text-gray-500">{f.items}</p>
          </div>
        ))}
      </div>
      <div className="pt-5 text-center text-[4px] leading-[7px] text-gray-600">
        <p className="font-bold text-gray-900">14 items</p>
        <p>Synced with iCloud</p>
      </div>
    </Tilt>
  </>
);

const suggested = [
  [
    { name: 'Temple Run: Classic', sub: 'The original endless runner', art: 'bg-[#c9a02c]', ink: '#5a4410', owned: true },
    { name: 'Brawl Stars', sub: 'Epic 3v3 and Battle Royale', art: 'bg-[#f6b01e]', ink: '#a8e020', owned: false },
    { name: 'MONOPOLY GO!', sub: 'Roll, Build, Steal & Connect', art: 'bg-[#d8262e]', ink: '#f2cdb4', owned: false },
    { name: '4 Bilder 1 Wort', sub: 'Rätsel', art: 'bg-[#3a3428]', ink: '#e8a83c', owned: true },
    { name: 'komoot - hike, bike & run', sub: 'Your all-in-one outdoor app', art: 'bg-[#f4f8f0]', ink: '#6cb02c', owned: false },
  ],
  [
    { name: 'Where is that?', sub: 'Easy learn geography', art: 'bg-[#2f6ea8]', ink: '#b4d8a0', owned: true },
    { name: 'Stop - Categories Word', sub: 'Fun family time', art: 'bg-[#c83c3c]', ink: '#ffffff', owned: false },
    { name: 'Candy Crush Saga', sub: 'Sweet Match 3 Puzzle Games', art: 'bg-[#4c9ce0]', ink: '#d83c28', owned: false },
    { name: 'Hill Climb Racing', sub: 'Race and drive uphill to win!', art: 'bg-[#7cccc8]', ink: '#c83c34', owned: true },
    { name: 'Sudoku.com - Number', sub: 'Numbers game with puzzle', art: 'bg-[#f4f6fa]', ink: '#8c9ab8', owned: false },
  ],
];

const StorePreview: React.FC = () => (
  <Tilt width={215} height={275} left={[20, 295]} right={[2, 257]} className="left-0 rounded-xl bg-white shadow-[0_8px_30px_rgba(0,40,80,0.4)]">
    <div className="flex h-[29px] items-start justify-between pl-3 pr-1 pt-2">
      <p className="pt-1 text-[8px] font-semibold leading-[14px]">Search</p>
      <div className="flex h-[13px] items-center gap-[5px] rounded-full bg-gray-200 pl-1 text-[5px] text-gray-600">
        <span>Today</span><span>Games</span><span>Apps</span><span>Arcade</span>
        <span className="flex h-[11px] w-[11px] items-center justify-center rounded-full bg-white text-blue-500">⌕</span>
      </div>
      <span className="ml-4 mt-1 size-[6px] rounded-full border border-blue-400" />
    </div>
    <div className="mx-3 flex h-[11px] items-center justify-between rounded-sm bg-gray-100 px-1 text-[4px] text-gray-500">
      <span>⌕ Games, Apps, Stories and More</span><span>▮</span>
    </div>
    <div className="px-3">
      <p className="mt-[7px] text-[6px] font-semibold leading-[12px]">Discover</p>
      <div className="mt-[2px] grid h-[34px] grid-cols-3 items-center text-[4px] text-blue-500">
        <span>⌕ bus simulator</span><span>⌕ speedtest</span><span>⌕ tado</span>
        <span>⌕ freevpn</span><span>⌕ poco</span><span>⌕ instagram follower</span>
      </div>
      <p className="mt-2 text-[6px] font-semibold leading-[12px]">Suggested</p>
      <div className="flex gap-2 pt-1">
        {suggested.map((col, i) => (
          <div key={i} className="w-[92px]">
            {col.map((app) => (
              <div key={app.name} className="mb-[2px] flex h-[24px] items-center gap-1 border-b border-black/5 text-[4px] leading-[6px]">
                <span className={`flex h-5 w-[14px] shrink-0 items-center justify-center rounded-sm ${app.art}`}>
                  <svg className="h-4 w-3" viewBox="0 0 12 16"><path d="M2 5Q6 -1 10 5L11 11Q6 17 1 11Z" fill={app.ink} /><path d="M3 6H5M7 6H9M4 11H8" stroke="#0006" strokeWidth="1.500" /></svg>
                </span>
                <span className="w-[54px] whitespace-nowrap">
                  <span className="block text-gray-700">{app.name}</span>
                  <span className="block text-[3px] text-gray-400">{app.sub}</span>
                </span>
                {app.owned
                  ? <span className="w-[14px] text-center text-[6px] text-blue-400">⇩</span>
                  : <span className="w-[14px] rounded-full bg-gray-100 py-px text-center font-semibold text-blue-500">Get</span>}
              </div>
            ))}
          </div>
        ))}
      </div>
    </div>
    <div className="absolute inset-0 bg-linear-to-b from-transparent via-transparent to-[#d8ecf4]/40" />
  </Tilt>
);

const stages = [
  { name: 'Photos', Preview: PhotosPreview, Icon: Photos },
  { name: 'Podcasts', Preview: PodcastsPreview, Icon: Podcasts },
  { name: 'Files', Preview: FilesPreview, Icon: Files },
  { name: 'App Store', Preview: StorePreview, Icon: AppStore },
];

const StageStrip: React.FC = () => (
  <nav aria-label="Recent apps" className="flex flex-col gap-[38px] pl-12">
    {stages.map(({ name, Preview, Icon }) => (
      <button key={name} aria-label={name} className="relative block h-[324px] w-[250px] text-left">
        <Preview />
        <span className="absolute -left-4 bottom-0 block size-[60px] overflow-hidden rounded-[14px] shadow-[0_4px_12px_rgba(0,0,0,0.3)]">
          <Icon />
        </span>
      </button>
    ))}
  </nav>
);

/* ---------- Status bar ---------- */

const StatusBar: React.FC = () => (
  <header className="flex h-12 items-center justify-between pl-[50px] pr-[52px] text-[24px] leading-[32px] text-white">
    <div className="flex gap-[22px] text-[25px]">
      <time>17:28</time>
      <span>Thu 13 Jun</span>
    </div>
    <div className="flex items-center gap-[9px]">
      <svg className="h-5 w-7" viewBox="0 0 28 20" aria-label="Wi-Fi">
        <g fill="none" stroke="#fff" strokeWidth="3.600">
          <path d="M1.500 7.200Q14 -3.600 26.500 7.200" />
          <path d="M6 12Q14 5 22 12" />
        </g>
        <path d="M9.500 15.500Q14 12 18.500 15.500L14 20Z" fill="#fff" />
      </svg>
      <span>67 %</span>
      <svg className="h-6 w-[53px]" viewBox="0 0 53 24" aria-label="Battery charging">
        <rect x="1" y="1" width="46" height="22" rx="7" fill="none" stroke="#fff" strokeOpacity="0.45" strokeWidth="2" />
        <path d="M50 8Q53 9 53 12Q53 15 50 16Z" fill="#fff" fillOpacity="0.5" />
        <rect x="4" y="4" width="28" height="16" rx="4.500" fill="#34c759" />
        <path d="M27 0L14.500 13.500H21.500L18.500 24L32 10H25Z" fill="#fff" stroke="#3fa0f6" strokeWidth="1.500" strokeLinejoin="round" paintOrder="stroke" />
      </svg>
    </div>
  </header>
);

/* ---------- App window ---------- */

const tabs = ['Tab 1', 'Tab 2'];

const AppWindow: React.FC = () => {
  const [active, setActive] = useState('Tab 1');

  return (
    <main className="relative mt-[65px] flex aspect-[1764/1280] flex-col self-start rounded-[40px] bg-white shadow-[0_20px_100px_rgba(0,10,50,0.45)]">
      <button aria-label="Window controls" className="mx-auto mt-[19px] flex gap-[6px]">
        <span className="size-[10px] rounded-full bg-[#999]" />
        <span className="size-[10px] rounded-full bg-[#999]" />
        <span className="size-[10px] rounded-full bg-[#999]" />
      </button>
      <div className="mx-auto mt-[27px] flex h-[81px] items-center rounded-full bg-[#e5e4e9] px-2 text-[33px] leading-[40px] font-medium">
        <button aria-label="Show sidebar" className="flex h-[65px] w-[112px] items-center justify-center">
          <svg className="h-[31px] w-10" viewBox="0 0 40 31" fill="none" stroke="#0a0a0a">
            <rect x="1.500" y="1.500" width="37" height="28" rx="4" strokeWidth="3" />
            <path d="M15.500 2V29" strokeWidth="3" />
            <path d="M6.500 8.500H10.500M6.500 13H10.500M6.500 17.500H10.500" strokeWidth="2" strokeLinecap="round" />
          </svg>
        </button>
        {tabs.map((tab) => (
          <button
            key={tab}
            onClick={() => setActive(tab)}
            className={`h-[65px] w-[147px] rounded-full ${active === tab ? 'bg-white font-semibold text-[#1684ff]' : 'text-[#0a0a0a]'}`}
          >
            {tab}
          </button>
        ))}
      </div>
      <h1 className="ml-10 mt-[19px] text-[64px] leading-[80px] font-bold text-black">{active}</h1>
      <svg className="absolute bottom-2 right-2 h-10 w-10" viewBox="0 0 40 40" aria-hidden="true">
        <path d="M32.500 12Q32.500 33 10 33" stroke="#000" strokeWidth="10" strokeLinecap="round" fill="none" />
      </svg>
    </main>
  );
};

/* ---------- Dock ---------- */

interface DockItemProps {
  label: string;
  badge?: string;
  children: React.ReactNode;
}

const DockItem: React.FC<DockItemProps> = ({ label, badge, children }) => (
  <button aria-label={label} className="relative block size-[136px] shrink-0">
    <span className="block size-full overflow-hidden rounded-[32px]">{children}</span>
    {badge && (
      <span className="absolute -right-5 -top-5 flex h-12 min-w-12 items-center justify-center rounded-full bg-[#ff3b30] px-[10px] text-[31px] leading-[40px] text-white">
        {badge}
      </span>
    )}
  </button>
);

const Dock: React.FC = () => (
  <footer className="mx-auto mb-[41px] mt-auto flex gap-[39px] rounded-[76px] bg-linear-to-r from-[#3c3a60] via-[#3b3969] to-[#3f3b6e] p-[38px]">
    <DockItem label="Safari"><Safari /></DockItem>
    <DockItem label="Mail" badge="2"><Mail /></DockItem>
    <DockItem label="Mona"><Elephant /></DockItem>
    <DockItem label="Bookmarks" badge="25"><Bookmark /></DockItem>
    <DockItem label="Files"><Files /></DockItem>
    <DockItem label="ChatGPT"><Knot /></DockItem>
    <DockItem label="Music"><Music /></DockItem>
    <span className="-my-[2px] w-[2px] bg-[#050038]" />
    <DockItem label="Template app"><Template /></DockItem>
    <DockItem label="Photos"><Photos /></DockItem>
    <div className="relative">
      <DockItem label="Notes"><Notes /></DockItem>
      <span className="absolute -right-5 -top-5 flex size-12 items-center justify-center rounded-full bg-[#c5c2cb]">
        <span className="flex h-4 w-[30px] items-center justify-end rounded-sm bg-[#04001c] pr-1">
          <span className="size-1 rounded-full bg-[#c5c2cb]" />
        </span>
      </span>
    </div>
    <div className="relative">
      <span className="absolute -left-[17px] top-5 h-24 w-20 rounded-[28px] bg-[#6f6cb6]" />
      <span className="absolute -left-[9px] top-[11px] h-[114px] w-20 rounded-[28px] bg-[#8f8ccd]" />
      <button aria-label="App Library" className="relative grid size-[136px] grid-cols-2 gap-[10px] rounded-[32px] bg-[#b5b3e8] p-[18px]">
        <span className="overflow-hidden rounded-[10px]"><Files /></span>
        <span className="overflow-hidden rounded-[10px]"><AppStore /></span>
        <span className="overflow-hidden rounded-[10px]"><FindMy /></span>
        <span className="overflow-hidden rounded-[10px]"><Settings /></span>
      </button>
    </div>
  </footer>
);

const App: React.FC = () => (
  <div className="bg-white font-['Inter',sans-serif]">
    <div className="relative isolate flex min-h-screen flex-col overflow-hidden rounded-xl">
      <div className="absolute inset-0 -z-10"><Wallpaper /></div>
      <StatusBar />
      <div className="grid grid-cols-[494px_1fr_494px] pt-[151px]">
        <StageStrip />
        <AppWindow />
      </div>
      <Dock />
    </div>
  </div>
);

export default App;
